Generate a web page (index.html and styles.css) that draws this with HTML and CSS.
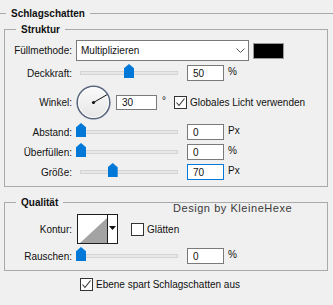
FILE: index.html
```html
<!DOCTYPE html>
<html lang="de">
<head>
    <meta charset="UTF-8">
    <title>Schlagschatten</title>
    <link rel="stylesheet" href="styles.css">
</head>
<body>
    <div class="dialog">
        <fieldset class="outer">
            <legend>Schlagschatten</legend>

            <fieldset class="group structure">
                <legend>Struktur</legend>
                <div class="rows">
                    <div class="row row-select">
                        <label class="label">Füllmethode:</label>
                        <div class="select">
                            <span>Multiplizieren</span>
                            <svg width="9" height="6" viewBox="0 0 9 6"><polyline points="0.5,0.5 4.5,4.5 8.5,0.5" fill="none" stroke="#555" stroke-width="1"/></svg>
                        </div>
                        <span class="swatch"></span>
                    </div>
                    <div class="row">
                        <label class="label">Deckkraft:</label>
                        <div class="slider"><div class="track"><span class="thumb" style="left: 50%"></span></div></div>
                        <div class="field"><input class="num" value="50"><span class="unit">%</span></div>
                    </div>
                    <div class="row row-angle">
                        <label class="label">Winkel:</label>
                        <svg class="dial" width="35" height="35" viewBox="0 0 35 35">
                            <defs>
                                <linearGradient id="dialFill" x1="0" y1="0" x2="0" y2="1">
                                    <stop offset="0" stop-color="#fafafa"/>
                                    <stop offset="1" stop-color="#e6e6e6"/>
                                </linearGradient>
                            </defs>
                            <circle cx="17.5" cy="17.5" r="16.3" fill="url(#dialFill)" stroke="#5b6680" stroke-width="1.6"/>
                            <circle cx="17.5" cy="17.5" r="15" fill="none" stroke="#ffffff" stroke-width="0.8"/>
                            <line x1="17.5" y1="17.5" x2="31" y2="9.7" stroke="#111" stroke-width="1"/>
                            <circle cx="17.5" cy="17.5" r="1.6" fill="#111"/>
                        </svg>
                        <div class="field field-angle"><input class="num num-wide" value="30"><span class="unit">°</span></div>
                        <label class="check"><span class="box"><svg width="11" height="11" viewBox="0 0 11 11"><polyline points="1.5,5.5 4,8.5 9.5,1.5" fill="none" stroke="#333" stroke-width="1.1"/></svg></span>Globales Licht verwenden</label>
                    </div>
                    <div class="row">
                        <label class="label">Abstand:</label>
                        <div class="slider"><div class="track"><span class="thumb" style="left: 0%"></span></div></div>
                        <div class="field"><input class="num" value="0"><span class="unit">Px</span></div>
                    </div>
                    <div class="row">
                        <label class="label">Überfüllen:</label>
                        <div class="slider"><div class="track"><span class="thumb" style="left: 0%"></span></div></div>
                        <div class="field"><input class="num" value="0"><span class="unit">%</span></div>
                    </div>
                    <div class="row">
                        <label class="label">Größe:</label>
                        <div class="slider"><div class="track"><span class="thumb" style="left: 33%"></span></div></div>
                        <div class="field"><input class="num focused" value="70"><span class="unit">Px</span></div>
                    </div>
                </div>
            </fieldset>

            <fieldset class="group quality">
                <legend>Qualität</legend>
                <div class="rows">
                    <p class="watermark">Design by KleineHexe</p>
                    <div class="row row-contour">
                        <label class="label">Kontur:</label>
                        <div class="contour">
                            <div class="contour-preview">
                                <svg width="29" height="28" viewBox="0 0 29 28"><polygon points="2,28 29,3 29,28" fill="#a3a3a3"/></svg>
                            </div>
                            <div class="contour-arrow">
                                <svg width="7" height="4" viewBox="0 0 7 4"><polygon points="0,0 7,0 3.5,4" fill="#111"/></svg>
                            </div>
                        </div>
                        <label class="check check-smooth"><span class="box"></span>Glätten</label>
                    </div>
                    <div class="row">
                        <label class="label">Rauschen:</label>
                        <div class="slider"><div class="track"><span class="thumb" style="left: 0%"></span></div></div>
                        <div class="field"><input class="num" value="0"><span class="unit">%</span></div>
                    </div>
                </div>
            </fieldset>

            <label class="check footer"><span class="box"><svg width="11" height="11" viewBox="0 0 11 11"><polyline points="1.5,5.5 4,8.5 9.5,1.5" fill="none" stroke="#333" stroke-width="1.1"/></svg></span>Ebene spart Schlagschatten aus</label>
        </fieldset>
    </div>
</body>
</html>
```

FILE: styles.css
```css
body {
    margin: 0;
    background: #f0f0f0;
    font-family: "Liberation Sans", Arial, sans-serif;
    font-size: 10px;
    color: #111;
}
.dialog {
    padding-top: 7px;
}
fieldset {
    margin: 0;
    padding: 0;
    min-width: 0;
    border: 1px solid #a9a9a9;
}
legend {
    font-weight: bold;
    line-height: 13px;
    padding: 0 5px;
}
.outer {
    border-width: 1px 0 0 0;
    padding: 3px 5px 0 4px;
}
.outer > legend {
    margin-left: 2px;
}
.group > legend {
    margin-left: 11px;
}
.structure {
    padding: 4px 0 6px;
}
.quality {
    margin-top: 9px;
    padding: 5px 0 6px;
}
.rows {
    position: relative;
    display: flex;
    flex-direction: column;
    gap: 4px;
}
.row {
    display: flex;
    align-items: center;
    gap: 4px;
}
.label {
    width: 67px;
    flex: none;
    text-align: right;
    line-height: 13px;
}
.select {
    width: 173px;
    height: 21px;
    box-sizing: border-box;
    border: 1px solid #7a7a7a;
    background: #fff;
    display: flex;
    align-items: center;
    justify-content: space-between;
    padding: 0 3px 0 4px;
}
.select svg {
    margin-top: 1px;
}
.swatch {
    width: 31px;
    height: 16px;
    box-sizing: border-box;
    background: #000;
    border: 1px solid #9a9a9a;
}
.slider {
    width: 107px;
    height: 16px;
    box-sizing: border-box;
    padding: 0 5px 0 4px;
    display: flex;
    align-items: center;
    flex: none;
}
.track {
    position: relative;
    flex: 1;
    height: 4px;
    box-sizing: border-box;
    background: #e7e7e7;
    border: 1px solid #d4d4d4;
}
.thumb {
    position: absolute;
    top: -8px;
    width: 10px;
    height: 14px;
    margin-left: -5px;
    background: #0078d7;
    clip-path: polygon(50% 0, 100% 30%, 100% 100%, 0 100%, 0 30%);
}
.field {
    display: flex;
    align-items: flex-start;
    gap: 4px;
}
.num {
    width: 37px;
    height: 16px;
    box-sizing: border-box;
    border: 1px solid #7a7a7a;
    padding: 0 0 0 5px;
    margin: 0;
    font: inherit;
    color: #111;
    background: #fff;
    outline: none;
}
.num.focused {
    border-color: #0078d7;
}
.num-wide {
    width: 41px;
    height: 15px;
}
.unit {
    line-height: 13px;
}
.row-angle .dial {
    flex: none;
}
.field-angle {
    margin-left: 1px;
    gap: 5px;
}
.field-angle .unit {
    margin-top: -1px;
}
.check {
    display: flex;
    align-items: center;
    gap: 3px;
    line-height: 13px;
}
.row-angle .check {
    margin-left: 4px;
}
.box {
    width: 13px;
    height: 13px;
    box-sizing: border-box;
    border: 1px solid #333;
    background: #fff;
    display: flex;
    align-items: center;
    justify-content: center;
}
.contour {
    margin-left: 1px;
    width: 41px;
    height: 30px;
    box-sizing: border-box;
    border: 1px solid #1e1e1e;
    display: flex;
}
.contour-preview {
    width: 29px;
    background: #fff;
    display: flex;
    align-items: flex-end;
}
.contour-preview svg {
    display: block;
}
.contour-arrow {
    flex: 1;
    border-left: 1px solid #1e1e1e;
    background: #fff;
    display: flex;
    justify-content: center;
    padding-top: 11px;
}
.check-smooth {
    margin-left: 9px;
}
.watermark {
    position: absolute;
    top: -12px;
    left: 168px;
    margin: 0;
    font-size: 11px;
    letter-spacing: 0.55px;
    line-height: 13px;
    color: #3a3a3a;
}
.footer {
    margin: 7px 0 0 76px;
}
```
